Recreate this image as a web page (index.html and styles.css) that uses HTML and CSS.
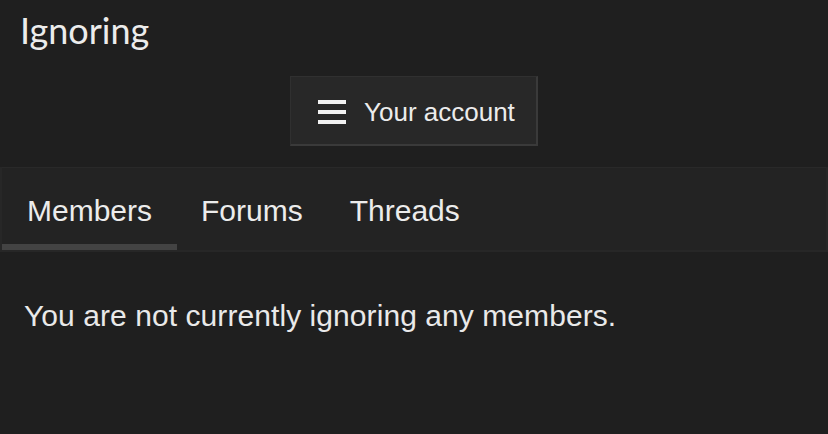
FILE: index.html
```html
<!DOCTYPE html>
<html>
<head>
<meta charset="utf-8">
<link rel="stylesheet" href="styles.css">
</head>
<body>
<h1 class="title">Ignoring</h1>
<div class="actions">
  <button class="account-btn">
    <span class="hamburger"><span></span><span></span><span></span></span>
    <span class="btn-label">Your account</span>
  </button>
</div>
<div class="tabs">
  <a class="tab active">Members</a>
  <a class="tab">Forums</a>
  <a class="tab">Threads</a>
</div>
<p class="empty">You are not currently ignoring any members.</p>
</body>
</html>
```
FILE: styles.css
```css
html, body {
  margin: 0;
  padding: 0;
  background: #1f1f1f;
  color: #e9e9e9;
  font-family: "Liberation Sans", Arial, sans-serif;
}
.title {
  margin: 0;
  padding: 8px 0 0 20px;
  font-family: "Lato", "Liberation Sans", sans-serif;
  font-weight: 400;
  font-size: 36px;
  line-height: 44px;
  color: #ececec;
}
.actions {
  display: flex;
  justify-content: center;
  padding-top: 24px;
}
.account-btn {
  display: flex;
  align-items: center;
  gap: 18px;
  width: 248px;
  height: 70px;
  box-sizing: border-box;
  padding: 0 0 0 27px;
  background: #282828;
  border: 1px solid #303030;
  border-right: 2px solid #3a3a3a;
  border-bottom: 2px solid #3a3a3a;
  color: #ececec;
  font-family: "Liberation Sans", Arial, sans-serif;
  font-size: 26px;
}
.btn-label {
  padding-top: 3px;
}
.hamburger {
  display: flex;
  flex-direction: column;
  gap: 6px;
  width: 28px;
  padding-top: 2px;
}
.hamburger span {
  display: block;
  height: 4px;
  background: #f2f2f2;
}
.tabs {
  display: flex;
  margin-top: 21px;
  height: 85px;
  box-sizing: border-box;
  background: #232323;
  border-top: 1px solid #292929;
  border-left: 2px solid #272727;
  border-right: 2px solid #272727;
  border-bottom: 2px solid #272727;
}
.tab {
  display: flex;
  align-items: center;
  padding: 10px 23px 0 24px;
  font-size: 30px;
  color: #ececec;
  border-bottom: 6px solid transparent;
}
.tab.active {
  padding-left: 25px;
  padding-right: 25px;
  border-bottom-color: #434343;
}
.empty {
  margin: 0;
  padding: 44px 0 0 24px;
  font-size: 30px;
  line-height: 40px;
  letter-spacing: 0.07px;
  color: #e9e9e9;
}
```
